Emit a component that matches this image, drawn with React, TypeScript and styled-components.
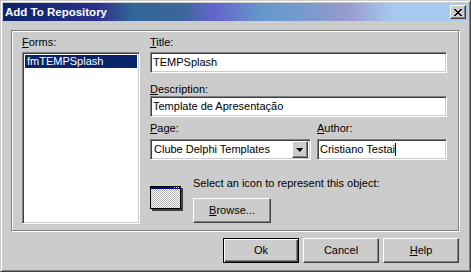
import React from "react";
import styled, { createGlobalStyle } from "styled-components";

const GlobalStyle = createGlobalStyle`
  html, body {
    margin: 0;
    padding: 0;
    background: #cccccc;
  }
  body {
    font-family: "Liberation Sans", Arial, sans-serif;
    font-size: 11px;
    color: #000;
  }
  * {
    box-sizing: border-box;
  }
`;

const Window = styled.div`
  width: 471px;
  height: 272px;
  background: #cccccc;
  border: 1px solid;
  border-color: #cccccc #404040 #404040 #cccccc;
  box-shadow: inset 1px 1px 0 #ffffff, inset -1px -1px 0 #808080;
  padding: 2px;
  display: flex;
  flex-direction: column;
`;

const TitleBar = styled.div`
  height: 18px;
  flex-shrink: 0;
  display: flex;
  align-items: center;
  padding: 0 2px;
  background: linear-gradient(
    90deg,
    #0a246a 0%,
    #2a2f8c 20%,
    #336699 28%,
    #3a6699 38%,
    #6666cc 46%,
    #6699cc 56%,
    #7a9acc 66%,
    #9999cc 74%,
    #a6caf0 84%,
    #a6caf0 100%
  );
`;

const Caption = styled.div`
  flex: 1;
  color: #ffffff;
  font-weight: bold;
  font-size: 11.5px;
  line-height: 13px;
  white-space: nowrap;
`;

const raised = `
  background: #cccccc;
  border: 1px solid;
  border-color: #ffffff #404040 #404040 #ffffff;
  box-shadow: inset -1px -1px 0 #808080;
`;

const sunken = `
  background: #ffffff;
  border: 1px solid;
  border-color: #808080 #ffffff #ffffff #808080;
  box-shadow: inset 1px 1px 0 #404040, inset -1px -1px 0 #cccccc;
`;

const CloseButton = styled.div`
  ${raised}
  width: 16px;
  height: 14px;
  display: flex;
  align-items: center;
  justify-content: center;
  padding-right: 1px;
`;

const Body = styled.div`
  flex: 1;
  display: flex;
  flex-direction: column;
  padding: 9px 9px 0 8px;
`;

const GroupBox = styled.div`
  height: 201px;
  border: 1px solid #808080;
  box-shadow: inset 1px 1px 0 #ffffff, 1px 1px 0 #ffffff;
  padding: 5px 0 0 10px;
  display: flex;
  gap: 10px;
`;

const Column = styled.div<{ $w: number }>`
  width: ${(p) => p.$w}px;
  display: flex;
  flex-direction: column;
`;

const Label = styled.div<{ $mt?: number }>`
  height: 13px;
  line-height: 13px;
  white-space: nowrap;
  margin-top: ${(p) => p.$mt ?? 0}px;
`;

const ListBox = styled.div`
  ${sunken}
  margin-top: 3px;
  height: 172px;
  padding: 2px;
`;

const ListItem = styled.div<{ $selected?: boolean }>`
  height: 13px;
  line-height: 13px;
  padding-left: 2px;
  white-space: nowrap;
  background: ${(p) => (p.$selected ? "#0a246a" : "transparent")};
  color: ${(p) => (p.$selected ? "#ffffff" : "#000000")};
`;

const Edit = styled.div<{ $mt?: number }>`
  ${sunken}
  height: 21px;
  margin-top: ${(p) => p.$mt ?? 0}px;
  padding: 0 2px;
  display: flex;
  align-items: center;
  line-height: 13px;
  white-space: nowrap;
  overflow: hidden;
`;

const Caret = styled.span`
  display: inline-block;
  width: 1px;
  height: 13px;
  background: #000;
  vertical-align: top;
`;

const FieldRow = styled.div`
  display: grid;
  grid-template-columns: 161px 130px;
  column-gap: 6px;
  margin-top: 5px;
`;

const Field = styled.div`
  display: flex;
  flex-direction: column;
`;

const Combo = styled.div`
  ${sunken}
  height: 21px;
  margin-top: 4px;
  padding: 2px;
  display: flex;
  align-items: center;
`;

const ComboText = styled.div`
  flex: 1;
  padding-left: 1px;
  line-height: 13px;
  white-space: nowrap;
`;

const DropButton = styled.div`
  ${raised}
  width: 16px;
  height: 17px;
  display: flex;
  align-items: center;
  justify-content: center;
`;

const Arrow = styled.div`
  width: 0;
  height: 0;
  border-left: 4px solid transparent;
  border-right: 3px solid transparent;
  border-top: 4px solid #000;
  margin-left: -1px;
`;

const IconRow = styled.div`
  display: flex;
  gap: 10px;
  margin-top: 17px;
`;

const IconWrap = styled.div`
  margin-top: 9px;
  width: 33px;
  height: 25px;
`;

const IconInfo = styled.div`
  display: flex;
  flex-direction: column;
  align-items: flex-start;
`;

const Button = styled.div<{ $w?: number; $default?: boolean; $mt?: number }>`
  width: ${(p) => p.$w ?? 76}px;
  height: 25px;
  margin-top: ${(p) => p.$mt ?? 0}px;
  display: flex;
  align-items: center;
  justify-content: center;
  background: #cccccc;
  border: 1px solid;
  border-color: ${(p) =>
    p.$default ? "#000000" : "#ffffff #404040 #404040 #ffffff"};
  box-shadow: ${(p) =>
    p.$default
      ? "inset 1px 1px 0 #ffffff, inset -1px -1px 0 #404040, inset -2px -2px 0 #808080"
      : "inset -1px -1px 0 #808080"};
  line-height: 13px;
`;

const ButtonRow = styled.div`
  display: flex;
  justify-content: flex-end;
  gap: 4px;
  margin-top: 7px;
`;

const CloseGlyph = () => {
  const rows = [
    "11000011",
    "01100110",
    "00111100",
    "00011000",
    "00111100",
    "01100110",
    "11000011",
  ];
  return (
    <svg width="8" height="7" viewBox="0 0 8 7" shapeRendering="crispEdges">
      {rows.flatMap((r, y) =>
        r.split("").map((c, x) =>
          c === "1" ? <rect key={`${x}-${y}`} x={x} y={y} width="1" height="1" fill="#000" /> : null
        )
      )}
    </svg>
  );
};

const FormIcon = () => (
  <svg width="33" height="25" viewBox="0 0 33 25" shapeRendering="crispEdges">
    <defs>
      <pattern id="chk" width="2" height="2" patternUnits="userSpaceOnUse">
        <rect width="2" height="2" fill="#ffffff" />
        <rect width="1" height="1" fill="#b4b4b4" />
        <rect x="1" y="1" width="1" height="1" fill="#b4b4b4" />
      </pattern>
    </defs>
    <rect x="2" y="2" width="31" height="23" fill="#404040" />
    <rect x="0" y="0" width="31" height="23" fill="#000" />
    <rect x="1" y="1" width="29" height="21" fill="url(#chk)" />
    <rect x="1" y="1" width="29" height="2" fill="#0000a8" />
    <rect x="24" y="1" width="1" height="1" fill="#fff" />
    <rect x="26" y="1" width="1" height="1" fill="#fff" />
    <rect x="28" y="1" width="1" height="1" fill="#fff" />
  </svg>
);

const App: React.FC = () => (
  <>
    <GlobalStyle />
    <Window>
      <TitleBar>
        <Caption>Add To Repository</Caption>
        <CloseButton>
          <CloseGlyph />
        </CloseButton>
      </TitleBar>
      <Body>
        <GroupBox>
          <Column $w={118}>
            <Label>
              <u>F</u>orms:
            </Label>
            <ListBox>
              <ListItem $selected>fmTEMPSplash</ListItem>
            </ListBox>
          </Column>
          <Column $w={297}>
            <Label>
              <u>T</u>itle:
            </Label>
            <Edit $mt={3}>TEMPSplash</Edit>
            <Label $mt={10}>
              <u>D</u>escription:
            </Label>
            <Edit>Template de Apresentação</Edit>
            <FieldRow>
              <Field>
                <Label>
                  <u>P</u>age:
                </Label>
                <Combo>
                  <ComboText>Clube Delphi Templates</ComboText>
                  <DropButton>
                    <Arrow />
                  </DropButton>
                </Combo>
              </Field>
              <Field>
                <Label>
                  <u>A</u>uthor:
                </Label>
                <Edit $mt={4}>
                  Cristiano Testai
                  <Caret />
                </Edit>
              </Field>
            </FieldRow>
            <IconRow>
              <IconWrap>
                <FormIcon />
              </IconWrap>
              <IconInfo>
                <Label>Select an icon to represent this object:</Label>
                <Button $w={78} $mt={8}>
                  <span>
                    <u>B</u>rowse...
                  </span>
                </Button>
              </IconInfo>
            </IconRow>
          </Column>
        </GroupBox>
        <ButtonRow>
          <Button $default>Ok</Button>
          <Button>Cancel</Button>
          <Button>
            <span>
              <u>H</u>elp
            </span>
          </Button>
        </ButtonRow>
      </Body>
    </Window>
  </>
);

export default App;
